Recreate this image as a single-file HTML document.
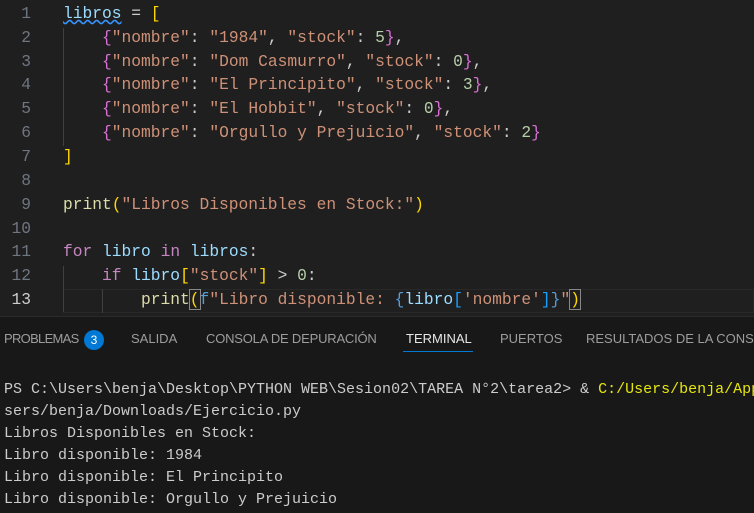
<!DOCTYPE html>
<html><head><meta charset="utf-8"><style>
*{margin:0;padding:0;box-sizing:border-box}
body{width:754px;height:513px;background:#1f1f1f;overflow:hidden;position:relative;font-family:"Liberation Mono",monospace}
.ed{position:absolute;left:0;top:0;width:754px;height:316px;background:#1f1f1f;overflow:hidden}
.ln{position:absolute;left:0;width:31px;text-align:right;color:#6e7681;font-size:16.25px;line-height:24px;height:24px}
.cl{position:absolute;left:63px;white-space:pre;font-size:16.25px;line-height:24px;height:24px;color:#cccccc}
.v{color:#9cdcfe}.s{color:#ce9178}.n{color:#b5cea8}.k{color:#c586c0}.f{color:#dcdcaa}.b1{color:#ffd700}.b2{color:#da70d6}.b3{color:#179fff}.bl{color:#569cd6}
.g{position:absolute;width:1px;background:#404040}
.panel{position:absolute;left:0;top:316px;width:754px;height:197px;background:#181818;border-top:1px solid #2b2b2b;overflow:hidden}
.tab{position:absolute;top:14px;font-family:"Liberation Sans",sans-serif;font-size:13px;color:#9d9d9d;white-space:nowrap}
.term{position:absolute;left:4px;font-size:15px;line-height:22px;color:#cccccc;white-space:pre}
</style></head><body>
<div class="ed">
<div class="ln" style="top:2px">1</div>
<div class="ln" style="top:26px">2</div>
<div class="ln" style="top:50px">3</div>
<div class="ln" style="top:73px">4</div>
<div class="ln" style="top:97px">5</div>
<div class="ln" style="top:121px">6</div>
<div class="ln" style="top:145px">7</div>
<div class="ln" style="top:169px">8</div>
<div class="ln" style="top:193px">9</div>
<div class="ln" style="top:217px">10</div>
<div class="ln" style="top:240px">11</div>
<div class="ln" style="top:264px">12</div>
<div style="position:absolute;left:63px;top:289px;width:691px;height:24px;border:1px solid #282828"></div>
<div class="ln" style="top:288px;color:#cccccc">13</div>
<div class="g" style="left:63px;top:28px;height:118px"></div>
<div class="g" style="left:63px;top:266px;height:46px"></div>
<div class="g" style="left:102px;top:289px;height:24px"></div>
<div class="cl" style="top:2px"><span class="v" style="text-decoration:underline wavy #3794ff">libros</span> = <span class="b1">[</span></div>
<div class="cl" style="top:26px">    <span class="b2">{</span><span class="s">"nombre"</span>: <span class="s">"1984"</span>, <span class="s">"stock"</span>: <span class="n">5</span><span class="b2">}</span>,</div>
<div class="cl" style="top:50px">    <span class="b2">{</span><span class="s">"nombre"</span>: <span class="s">"Dom Casmurro"</span>, <span class="s">"stock"</span>: <span class="n">0</span><span class="b2">}</span>,</div>
<div class="cl" style="top:73px">    <span class="b2">{</span><span class="s">"nombre"</span>: <span class="s">"El Principito"</span>, <span class="s">"stock"</span>: <span class="n">3</span><span class="b2">}</span>,</div>
<div class="cl" style="top:97px">    <span class="b2">{</span><span class="s">"nombre"</span>: <span class="s">"El Hobbit"</span>, <span class="s">"stock"</span>: <span class="n">0</span><span class="b2">}</span>,</div>
<div class="cl" style="top:121px">    <span class="b2">{</span><span class="s">"nombre"</span>: <span class="s">"Orgullo y Prejuicio"</span>, <span class="s">"stock"</span>: <span class="n">2</span><span class="b2">}</span></div>
<div class="cl" style="top:145px"><span class="b1">]</span></div>
<div class="cl" style="top:193px"><span class="f">print</span><span class="b1">(</span><span class="s">"Libros Disponibles en Stock:"</span><span class="b1">)</span></div>
<div class="cl" style="top:240px"><span class="k">for</span> <span class="v">libro</span> <span class="k">in</span> <span class="v">libros</span>:</div>
<div class="cl" style="top:264px">    <span class="k">if</span> <span class="v">libro</span><span class="b1">[</span><span class="s">"stock"</span><span class="b1">]</span> &gt; <span class="n">0</span>:</div>
<div class="cl" style="top:288px">        <span class="f">print</span><span class="b1" style="outline:1px solid #888">(</span><span class="bl">f</span><span class="s">"Libro disponible: </span><span class="bl">{</span><span class="v">libro</span><span class="b3">[</span><span class="s">'nombre'</span><span class="b3">]</span><span class="bl">}</span><span class="s">"</span><span class="b1" style="outline:1px solid #888">)</span></div>
</div>
<div class="panel">
<div class="tab" style="left:4px;letter-spacing:-0.7px">PROBLEMAS</div>
<div style="position:absolute;left:84px;top:13px;width:20px;height:20px;border-radius:50%;background:#0078d4;color:#fff;font-family:'Liberation Sans',sans-serif;font-size:12px;text-align:center;line-height:20px">3</div>
<div class="tab" style="left:131px">SALIDA</div>
<div class="tab" style="left:206px;letter-spacing:-0.2px">CONSOLA DE DEPURACIÓN</div>
<div class="tab" style="left:406px;color:#e7e7e7">TERMINAL</div>
<div style="position:absolute;left:403px;top:34px;width:70px;height:1px;background:#0078d4"></div>
<div class="tab" style="left:500px">PUERTOS</div>
<div class="tab" style="left:586px">RESULTADOS DE LA CONSOLA</div>
<div class="term" style="top:62px">PS C:\Users\benja\Desktop\PYTHON WEB\Sesion02\TAREA N°2\tarea2&gt; &amp; <span style="color:#e5e510">C:/Users/benja/AppData</span></div>
<div class="term" style="top:84px">sers/benja/Downloads/Ejercicio.py</div>
<div class="term" style="top:106px">Libros Disponibles en Stock:</div>
<div class="term" style="top:128px">Libro disponible: 1984</div>
<div class="term" style="top:150px">Libro disponible: El Principito</div>
<div class="term" style="top:172px">Libro disponible: Orgullo y Prejuicio</div>
</div>
</body></html>
